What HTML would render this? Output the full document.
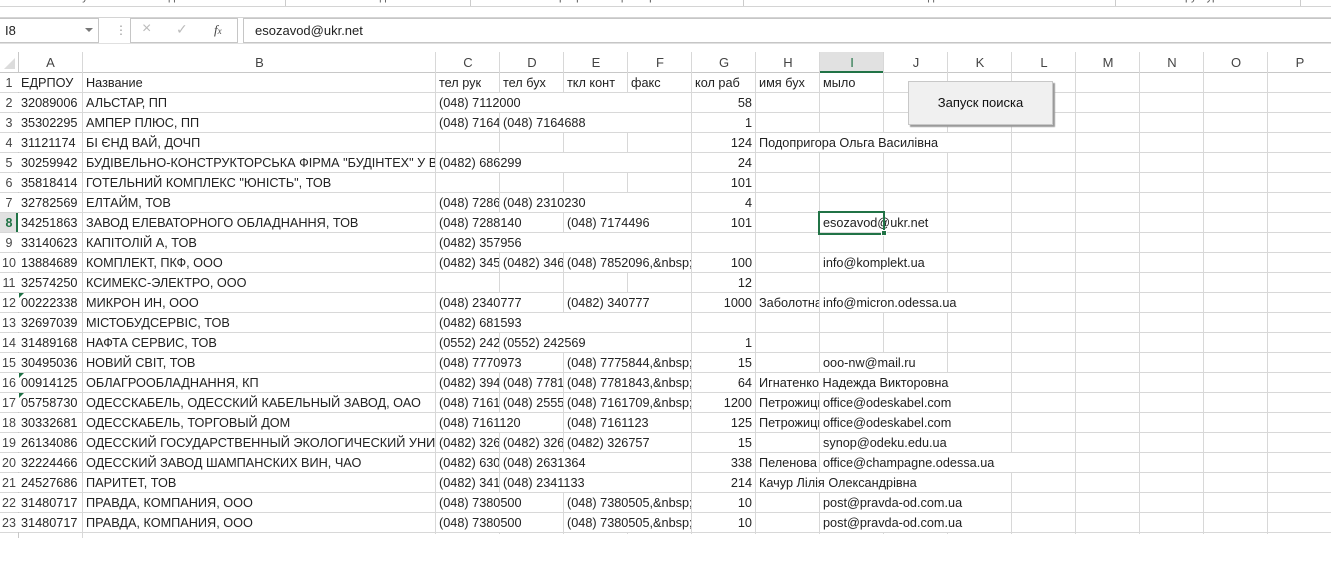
<!DOCTYPE html>
<html><head><meta charset="utf-8"><style>
*{margin:0;padding:0;box-sizing:border-box}
body{width:1331px;height:570px;position:relative;overflow:hidden;background:#fff;font-family:"Liberation Sans","DejaVu Sans",sans-serif;color:#222}
.a{position:absolute}
.c{position:absolute;height:19px;line-height:21px;font-size:12.7px;white-space:nowrap;overflow:hidden;padding-left:3px;background:#fff}
.r{text-align:right;padding-right:3px;padding-left:0}
.vl{position:absolute;width:1px;background:#d8d8d8}
.ch{position:absolute;top:52px;height:21px;line-height:21px;font-size:13px;text-align:center;color:#444}
.rn{position:absolute;left:0;width:18px;height:20px;line-height:21px;font-size:12.5px;text-align:center;color:#444}
.tri{position:absolute;left:19px;width:0;height:0;border-top:5px solid #1e7145;border-right:5px solid transparent}
</style></head><body>
<div class="a" style="left:0;top:0;width:1331px;height:6px;overflow:hidden;font-size:11px;color:#555">
<span class="a" style="left:62px;top:-9px">Получение внешних данных</span>
<span class="a" style="left:366px;top:-9px">Подключения</span>
<span class="a" style="left:545px;top:-9px">Сортировка и фильтр</span>
<span class="a" style="left:880px;top:-9px">Работа с данными</span>
<span class="a" style="left:1172px;top:-9px">Структура</span>
</div>
<div class="a" style="left:285px;top:0;width:1px;height:6px;background:#ccc"></div>
<div class="a" style="left:470px;top:0;width:1px;height:6px;background:#ccc"></div>
<div class="a" style="left:743px;top:0;width:1px;height:6px;background:#ccc"></div>
<div class="a" style="left:1115px;top:0;width:1px;height:6px;background:#ccc"></div>
<div class="a" style="left:1300px;top:0;width:1px;height:6px;background:#ccc"></div>
<div class="a" style="left:0;top:6px;width:1331px;height:1px;background:#d4d4d4"></div>
<div class="a" style="left:0;top:17px;width:1331px;height:1px;background:#d4d4d4"></div>
<div class="a" style="left:0;top:18px;width:99px;height:25px;border:1px solid #c6c6c6;border-left:none;font-size:13px;line-height:23px;padding-left:5px">I8</div>
<div class="a" style="left:85px;top:28px;width:0;height:0;border-left:4px solid transparent;border-right:4px solid transparent;border-top:4px solid #777"></div>
<div class="a" style="left:115px;top:24px;font-size:12px;color:#999;line-height:12px">⋮</div>
<div class="a" style="left:130px;top:18px;width:108px;height:25px;border:1px solid #c6c6c6"></div>
<div class="a" style="left:142px;top:20px;font-size:16px;color:#bbb">×</div>
<div class="a" style="left:176px;top:21px;font-size:14px;color:#bbb">✓</div>
<div class="a" style="left:214px;top:22px;font-size:13px;font-style:italic;font-family:'Liberation Serif',serif;color:#444">f<span style="font-size:9px">x</span></div>
<div class="a" style="left:243px;top:18px;width:1090px;height:25px;border:1px solid #c6c6c6;font-size:13px;line-height:23px;padding-left:11px">esozavod@ukr.net</div>
<div class="a" style="left:0;top:43px;width:1331px;height:1px;background:#e0e0e0"></div>
<div class="a" style="left:0;top:72px;width:1331px;height:1px;background:#c8c8c8"></div>
<div class="a" style="left:4px;top:58px;width:0;height:0;border-left:11px solid transparent;border-bottom:11px solid #dcdcdc"></div>
<div class="a" style="left:820px;top:52px;width:64px;height:21px;background:#e1e1e1;border-bottom:2px solid #217346"></div>
<div class="a" style="left:0;top:213px;width:18px;height:20px;background:#e1e1e1;border-right:2px solid #217346"></div>
<div class="ch" style="left:18px;width:65px">A</div>
<div class="ch" style="left:83px;width:353px">B</div>
<div class="ch" style="left:436px;width:64px">C</div>
<div class="ch" style="left:500px;width:64px">D</div>
<div class="ch" style="left:564px;width:64px">E</div>
<div class="ch" style="left:628px;width:64px">F</div>
<div class="ch" style="left:692px;width:64px">G</div>
<div class="ch" style="left:756px;width:64px">H</div>
<div class="ch" style="left:820px;width:64px;color:#217346">I</div>
<div class="ch" style="left:884px;width:64px">J</div>
<div class="ch" style="left:948px;width:64px">K</div>
<div class="ch" style="left:1012px;width:64px">L</div>
<div class="ch" style="left:1076px;width:64px">M</div>
<div class="ch" style="left:1140px;width:64px">N</div>
<div class="ch" style="left:1204px;width:64px">O</div>
<div class="ch" style="left:1268px;width:64px">P</div>
<div class="a" style="left:0;top:73px;width:1331px;height:461px;background:repeating-linear-gradient(to bottom,transparent 0,transparent 19px,#d8d8d8 19px,#d8d8d8 20px)"></div>
<div class="vl" style="left:18px;top:52px;height:486px;background:#c8c8c8"></div>
<div class="vl" style="left:82px;top:52px;height:486px"></div>
<div class="vl" style="left:435px;top:52px;height:482px"></div>
<div class="vl" style="left:499px;top:52px;height:482px"></div>
<div class="vl" style="left:563px;top:52px;height:482px"></div>
<div class="vl" style="left:627px;top:52px;height:482px"></div>
<div class="vl" style="left:691px;top:52px;height:482px"></div>
<div class="vl" style="left:755px;top:52px;height:482px"></div>
<div class="vl" style="left:819px;top:52px;height:482px"></div>
<div class="vl" style="left:883px;top:52px;height:482px"></div>
<div class="vl" style="left:947px;top:52px;height:482px"></div>
<div class="vl" style="left:1011px;top:52px;height:482px"></div>
<div class="vl" style="left:1075px;top:52px;height:482px"></div>
<div class="vl" style="left:1139px;top:52px;height:482px"></div>
<div class="vl" style="left:1203px;top:52px;height:482px"></div>
<div class="vl" style="left:1267px;top:52px;height:482px"></div>
<div class="rn" style="top:73px">1</div><div class="rn" style="top:93px">2</div><div class="rn" style="top:113px">3</div><div class="rn" style="top:133px">4</div><div class="rn" style="top:153px">5</div><div class="rn" style="top:173px">6</div><div class="rn" style="top:193px">7</div><div class="rn" style="top:213px;color:#217346;font-weight:bold">8</div><div class="rn" style="top:233px">9</div><div class="rn" style="top:253px">10</div><div class="rn" style="top:273px">11</div><div class="rn" style="top:293px">12</div><div class="rn" style="top:313px">13</div><div class="rn" style="top:333px">14</div><div class="rn" style="top:353px">15</div><div class="rn" style="top:373px">16</div><div class="rn" style="top:393px">17</div><div class="rn" style="top:413px">18</div><div class="rn" style="top:433px">19</div><div class="rn" style="top:453px">20</div><div class="rn" style="top:473px">21</div><div class="rn" style="top:493px">22</div><div class="rn" style="top:513px">23</div>
<div class="c" style="top:73px;left:18px;width:64px">ЕДРПОУ</div><div class="c" style="top:73px;left:83px;width:352px">Название</div><div class="c" style="top:73px;left:436px;width:63px">тел рук</div><div class="c" style="top:73px;left:500px;width:63px">тел бух</div><div class="c" style="top:73px;left:564px;width:63px">ткл конт</div><div class="c" style="top:73px;left:628px;width:63px">факс</div><div class="c" style="top:73px;left:692px;width:63px">кол раб</div><div class="c" style="top:73px;left:756px;width:63px">имя бух</div><div class="c" style="top:73px;left:820px;width:63px">мыло</div>
<div class="c" style="top:93px;left:18px;width:64px">32089006</div><div class="c" style="top:93px;left:83px;width:352px">АЛЬСТАР, ПП</div><div class="c" style="top:93px;left:436px;width:255px">(048) 7112000</div><div class="c r" style="top:93px;left:692px;width:63px">58</div>
<div class="c" style="top:113px;left:18px;width:64px">35302295</div><div class="c" style="top:113px;left:83px;width:352px">АМПЕР ПЛЮС, ПП</div><div class="c" style="top:113px;left:436px;width:63px">(048) 7164688</div><div class="c" style="top:113px;left:500px;width:191px">(048) 7164688</div><div class="c r" style="top:113px;left:692px;width:63px">1</div>
<div class="c" style="top:133px;left:18px;width:64px">31121174</div><div class="c" style="top:133px;left:83px;width:352px">БІ ЄНД ВАЙ, ДОЧП</div><div class="c r" style="top:133px;left:692px;width:63px">124</div><div class="c" style="top:133px;left:756px;width:255px">Подопригора Ольга Василівна</div>
<div class="c" style="top:153px;left:18px;width:64px">30259942</div><div class="c" style="top:153px;left:83px;width:352px">БУДІВЕЛЬНО-КОНСТРУКТОРСЬКА ФІРМА "БУДІНТЕХ" У ВИГЛЯДІ ТОВ</div><div class="c" style="top:153px;left:436px;width:255px">(0482) 686299</div><div class="c r" style="top:153px;left:692px;width:63px">24</div>
<div class="c" style="top:173px;left:18px;width:64px">35818414</div><div class="c" style="top:173px;left:83px;width:352px">ГОТЕЛЬНИЙ КОМПЛЕКС "ЮНІСТЬ", ТОВ</div><div class="c r" style="top:173px;left:692px;width:63px">101</div>
<div class="c" style="top:193px;left:18px;width:64px">32782569</div><div class="c" style="top:193px;left:83px;width:352px">ЕЛТАЙМ, ТОВ</div><div class="c" style="top:193px;left:436px;width:63px">(048) 7286000</div><div class="c" style="top:193px;left:500px;width:191px">(048) 2310230</div><div class="c r" style="top:193px;left:692px;width:63px">4</div>
<div class="c" style="top:213px;left:18px;width:64px">34251863</div><div class="c" style="top:213px;left:83px;width:352px">ЗАВОД ЕЛЕВАТОРНОГО ОБЛАДНАННЯ, ТОВ</div><div class="c" style="top:213px;left:436px;width:127px">(048) 7288140</div><div class="c" style="top:213px;left:564px;width:127px">(048) 7174496</div><div class="c r" style="top:213px;left:692px;width:63px">101</div><div class="c" style="top:213px;left:820px;width:127px">esozavod@ukr.net</div>
<div class="c" style="top:233px;left:18px;width:64px">33140623</div><div class="c" style="top:233px;left:83px;width:352px">КАПІТОЛІЙ А, ТОВ</div><div class="c" style="top:233px;left:436px;width:255px">(0482) 357956</div>
<div class="c" style="top:253px;left:18px;width:64px">13884689</div><div class="c" style="top:253px;left:83px;width:352px">КОМПЛЕКТ, ПКФ, ООО</div><div class="c" style="top:253px;left:436px;width:63px">(0482) 345000</div><div class="c" style="top:253px;left:500px;width:63px">(0482) 346000</div><div class="c" style="top:253px;left:564px;width:127px">(048) 7852096,&amp;nbsp;</div><div class="c r" style="top:253px;left:692px;width:63px">100</div><div class="c" style="top:253px;left:820px;width:127px">info@komplekt.ua</div>
<div class="c" style="top:273px;left:18px;width:64px">32574250</div><div class="c" style="top:273px;left:83px;width:352px">КСИМЕКС-ЭЛЕКТРО, ООО</div><div class="c r" style="top:273px;left:692px;width:63px">12</div>
<div class="c" style="top:293px;left:18px;width:64px">00222338</div><div class="c" style="top:293px;left:83px;width:352px">МИКРОН ИН, ООО</div><div class="c" style="top:293px;left:436px;width:127px">(048) 2340777</div><div class="c" style="top:293px;left:564px;width:127px">(0482) 340777</div><div class="c r" style="top:293px;left:692px;width:63px">1000</div><div class="c" style="top:293px;left:756px;width:63px">Заболотная</div><div class="c" style="top:293px;left:820px;width:191px">info@micron.odessa.ua</div>
<div class="c" style="top:313px;left:18px;width:64px">32697039</div><div class="c" style="top:313px;left:83px;width:352px">МІСТОБУДСЕРВІС, ТОВ</div><div class="c" style="top:313px;left:436px;width:255px">(0482) 681593</div>
<div class="c" style="top:333px;left:18px;width:64px">31489168</div><div class="c" style="top:333px;left:83px;width:352px">НАФТА СЕРВИС, ТОВ</div><div class="c" style="top:333px;left:436px;width:63px">(0552) 242569</div><div class="c" style="top:333px;left:500px;width:191px">(0552) 242569</div><div class="c r" style="top:333px;left:692px;width:63px">1</div>
<div class="c" style="top:353px;left:18px;width:64px">30495036</div><div class="c" style="top:353px;left:83px;width:352px">НОВИЙ СВІТ, ТОВ</div><div class="c" style="top:353px;left:436px;width:127px">(048) 7770973</div><div class="c" style="top:353px;left:564px;width:127px">(048) 7775844,&amp;nbsp;</div><div class="c r" style="top:353px;left:692px;width:63px">15</div><div class="c" style="top:353px;left:820px;width:127px">ooo-nw@mail.ru</div>
<div class="c" style="top:373px;left:18px;width:64px">00914125</div><div class="c" style="top:373px;left:83px;width:352px">ОБЛАГРООБЛАДНАННЯ, КП</div><div class="c" style="top:373px;left:436px;width:63px">(0482) 394000</div><div class="c" style="top:373px;left:500px;width:63px">(048) 7781000</div><div class="c" style="top:373px;left:564px;width:127px">(048) 7781843,&amp;nbsp;</div><div class="c r" style="top:373px;left:692px;width:63px">64</div><div class="c" style="top:373px;left:756px;width:255px">Игнатенко Надежда Викторовна</div>
<div class="c" style="top:393px;left:18px;width:64px">05758730</div><div class="c" style="top:393px;left:83px;width:352px">ОДЕССКАБЕЛЬ, ОДЕССКИЙ КАБЕЛЬНЫЙ ЗАВОД, ОАО</div><div class="c" style="top:393px;left:436px;width:63px">(048) 7161000</div><div class="c" style="top:393px;left:500px;width:63px">(048) 2555000</div><div class="c" style="top:393px;left:564px;width:127px">(048) 7161709,&amp;nbsp;</div><div class="c r" style="top:393px;left:692px;width:63px">1200</div><div class="c" style="top:393px;left:756px;width:63px">Петрожицкая</div><div class="c" style="top:393px;left:820px;width:191px">office@odeskabel.com</div>
<div class="c" style="top:413px;left:18px;width:64px">30332681</div><div class="c" style="top:413px;left:83px;width:352px">ОДЕССКАБЕЛЬ, ТОРГОВЫЙ ДОМ</div><div class="c" style="top:413px;left:436px;width:127px">(048) 7161120</div><div class="c" style="top:413px;left:564px;width:127px">(048) 7161123</div><div class="c r" style="top:413px;left:692px;width:63px">125</div><div class="c" style="top:413px;left:756px;width:63px">Петрожицкая</div><div class="c" style="top:413px;left:820px;width:191px">office@odeskabel.com</div>
<div class="c" style="top:433px;left:18px;width:64px">26134086</div><div class="c" style="top:433px;left:83px;width:352px">ОДЕССКИЙ ГОСУДАРСТВЕННЫЙ ЭКОЛОГИЧЕСКИЙ УНИВЕРСИТЕТ</div><div class="c" style="top:433px;left:436px;width:63px">(0482) 326000</div><div class="c" style="top:433px;left:500px;width:63px">(0482) 326000</div><div class="c" style="top:433px;left:564px;width:127px">(0482) 326757</div><div class="c r" style="top:433px;left:692px;width:63px">15</div><div class="c" style="top:433px;left:820px;width:191px">synop@odeku.edu.ua</div>
<div class="c" style="top:453px;left:18px;width:64px">32224466</div><div class="c" style="top:453px;left:83px;width:352px">ОДЕССКИЙ ЗАВОД ШАМПАНСКИХ ВИН, ЧАО</div><div class="c" style="top:453px;left:436px;width:63px">(0482) 630000</div><div class="c" style="top:453px;left:500px;width:191px">(048) 2631364</div><div class="c r" style="top:453px;left:692px;width:63px">338</div><div class="c" style="top:453px;left:756px;width:63px">Пеленова</div><div class="c" style="top:453px;left:820px;width:255px">office@champagne.odessa.ua</div>
<div class="c" style="top:473px;left:18px;width:64px">24527686</div><div class="c" style="top:473px;left:83px;width:352px">ПАРИТЕТ, ТОВ</div><div class="c" style="top:473px;left:436px;width:63px">(0482) 341000</div><div class="c" style="top:473px;left:500px;width:191px">(048) 2341133</div><div class="c r" style="top:473px;left:692px;width:63px">214</div><div class="c" style="top:473px;left:756px;width:255px">Качур Лілія Олександрівна</div>
<div class="c" style="top:493px;left:18px;width:64px">31480717</div><div class="c" style="top:493px;left:83px;width:352px">ПРАВДА, КОМПАНИЯ, ООО</div><div class="c" style="top:493px;left:436px;width:127px">(048) 7380500</div><div class="c" style="top:493px;left:564px;width:127px">(048) 7380505,&amp;nbsp;</div><div class="c r" style="top:493px;left:692px;width:63px">10</div><div class="c" style="top:493px;left:820px;width:191px">post@pravda-od.com.ua</div>
<div class="c" style="top:513px;left:18px;width:64px">31480717</div><div class="c" style="top:513px;left:83px;width:352px">ПРАВДА, КОМПАНИЯ, ООО</div><div class="c" style="top:513px;left:436px;width:127px">(048) 7380500</div><div class="c" style="top:513px;left:564px;width:127px">(048) 7380505,&amp;nbsp;</div><div class="c r" style="top:513px;left:692px;width:63px">10</div><div class="c" style="top:513px;left:820px;width:191px">post@pravda-od.com.ua</div>
<div class="tri" style="top:293px"></div><div class="tri" style="top:373px"></div><div class="tri" style="top:393px"></div>
<div class="a" style="left:818px;top:211px;width:67px;height:24px;border:2px solid #217346"></div>
<div class="a" style="left:881px;top:230px;width:6px;height:6px;background:#217346;border:1px solid #fff"></div>
<div class="a" style="left:908px;top:81px;width:145px;height:44px;background:#f0f0f0;border:1px solid #c8c8c8;box-shadow:2px 2px 1px #9a9a9a;font-size:13px;line-height:42px;text-align:center;color:#111">Запуск поиска</div>
</body></html>
